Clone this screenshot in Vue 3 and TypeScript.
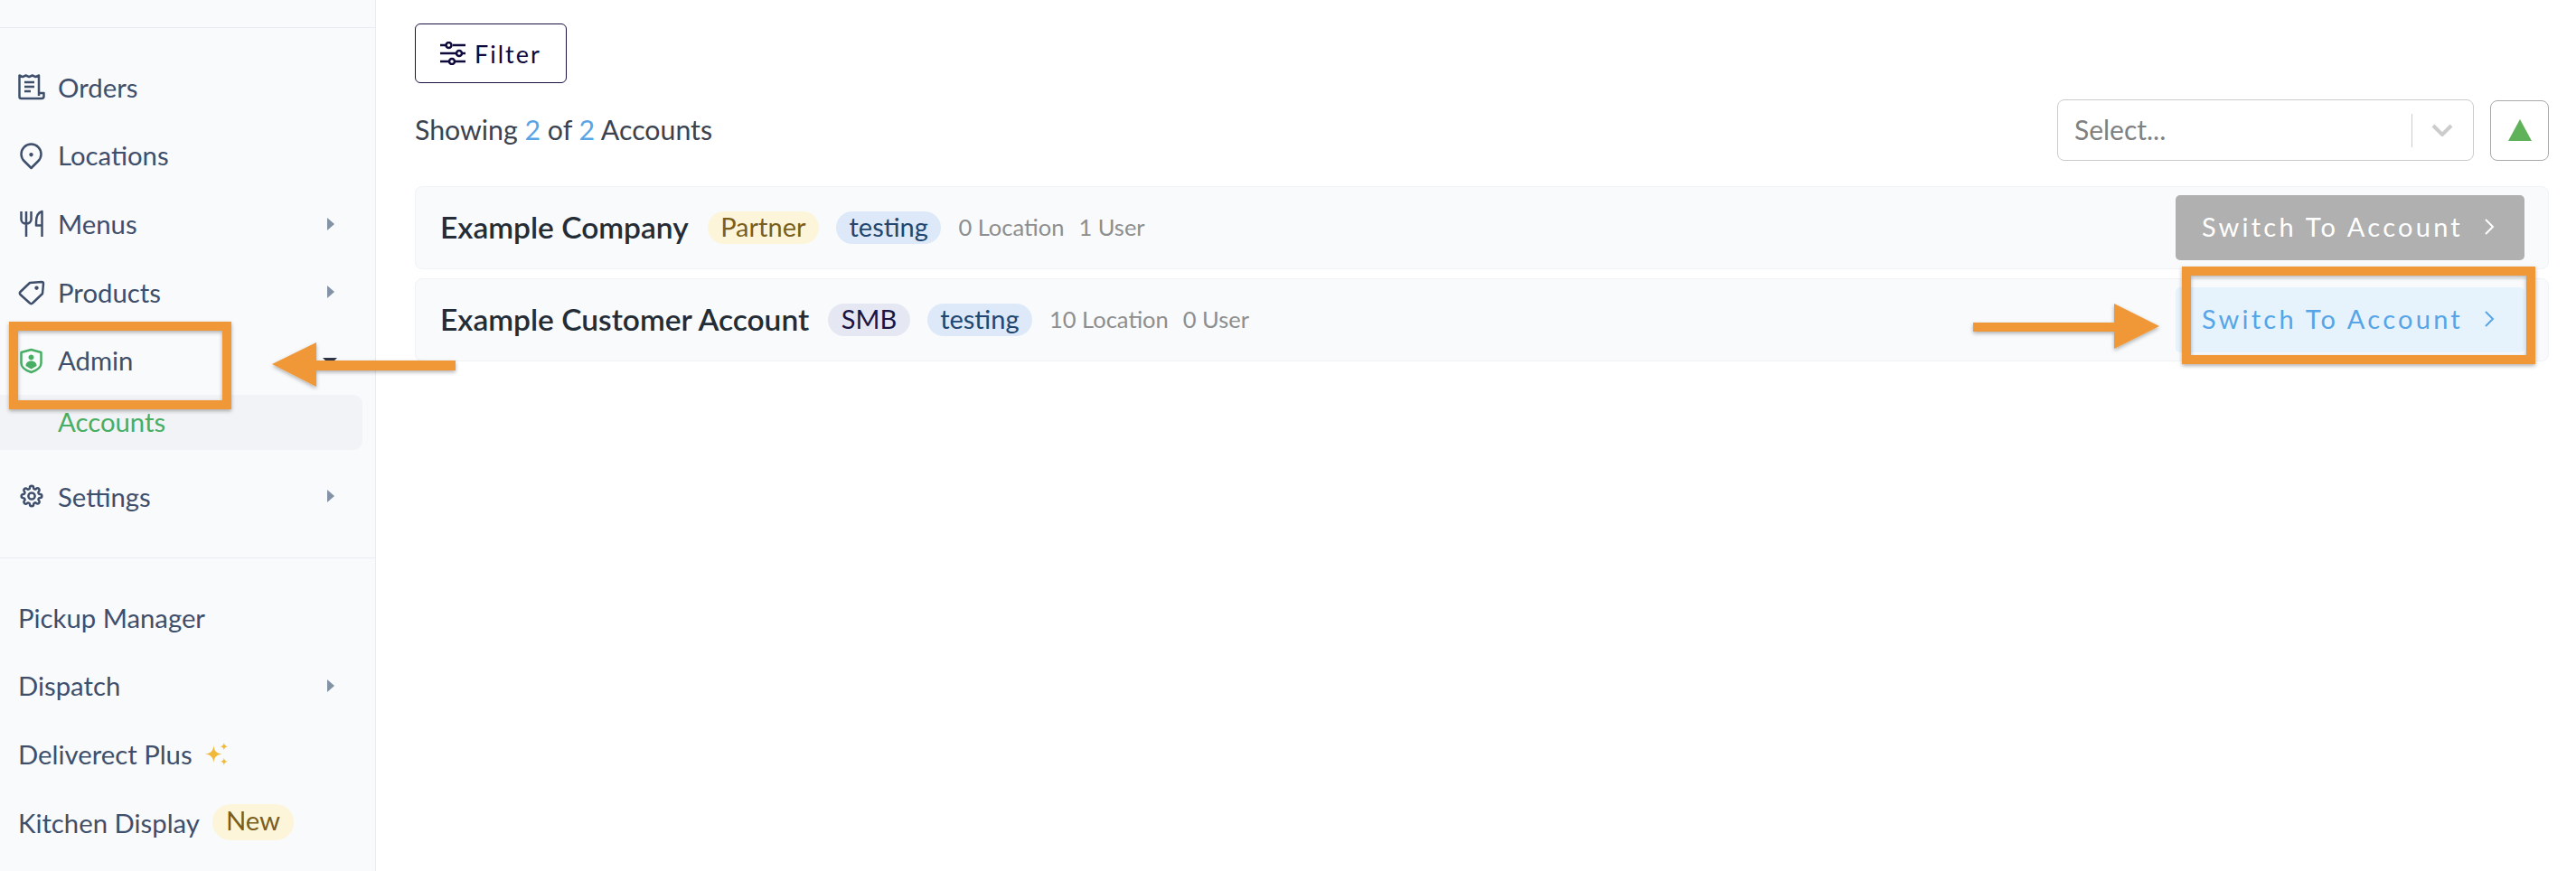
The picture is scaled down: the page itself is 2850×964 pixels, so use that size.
<script setup lang="ts">
interface NavIcon {
  viewBox?: string
  strokes: string[]
  fills?: string[]
}

interface NavItem {
  label: string
  icon?: NavIcon
  caret?: 'right' | 'down'
  active?: boolean
}

const gear =
  'M19.4 15a1.65 1.65 0 0 0 .33 1.82l.06.06a2 2 0 0 1 0 2.83 2 2 0 0 1-2.83 0l-.06-.06a1.65 1.65 0 0 0-1.82-.33 1.65 1.65 0 0 0-1 1.51V21a2 2 0 0 1-2 2 2 2 0 0 1-2-2v-.09A1.65 1.65 0 0 0 9 19.4a1.65 1.65 0 0 0-1.82.33l-.06.06a2 2 0 0 1-2.83 0 2 2 0 0 1 0-2.83l.06-.06a1.65 1.65 0 0 0 .33-1.82 1.65 1.65 0 0 0-1.51-1H3a2 2 0 0 1-2-2 2 2 0 0 1 2-2h.09A1.65 1.65 0 0 0 4.6 9a1.65 1.65 0 0 0-.33-1.82l-.06-.06a2 2 0 0 1 0-2.83 2 2 0 0 1 2.83 0l.06.06a1.65 1.65 0 0 0 1.82.33H9a1.65 1.65 0 0 0 1-1.51V3a2 2 0 0 1 2-2 2 2 0 0 1 2 2v.09a1.65 1.65 0 0 0 1 1.51 1.65 1.65 0 0 0 1.82-.33l.06-.06a2 2 0 0 1 2.83 0 2 2 0 0 1 0 2.83l-.06.06a1.65 1.65 0 0 0-.33 1.82V9a1.65 1.65 0 0 0 1.51 1H21a2 2 0 0 1 2 2 2 2 0 0 1-2 2h-.09a1.65 1.65 0 0 0-1.51 1z'

const mainNav: NavItem[] = [
  {
    label: 'Orders',
    icon: {
      strokes: [
        'M24 26V3.5l-3.6 1.6-3.6-1.6-3.6 1.6-3.6-1.6-3.6 1.6L2.5 3.5V27a2 2 0 0 0 2 2h22.5a2.5 2.5 0 0 0 2.5-2.5V23H24',
        'M8 11h11M8 16h11M8 21h7'
      ]
    }
  },
  {
    label: 'Locations',
    icon: {
      strokes: ['M15.5 30L8 22.5A11 11 0 1 1 23 22.5Z'],
      fills: ['M15.5 13a2.2 2.2 0 1 0 .01 0z']
    }
  },
  {
    label: 'Menus',
    caret: 'right',
    icon: {
      strokes: ['M4.5 3v9a5.5 4.5 0 0 0 11 0V3M10 3v28', 'M27.5 31V3c-4 1-6.5 5-6.5 12v3.5h6.5']
    }
  },
  {
    label: 'Products',
    caret: 'right',
    icon: {
      strokes: ['M3.5 16L14 6l13-1a2 2 0 0 1 2 2l-1 11-11 10.5a2 2 0 0 1-3 0L3.5 19a2 2 0 0 1 0-3z'],
      fills: ['M21.5 9.5a2.2 2.2 0 1 0 .01 0z']
    }
  },
  {
    label: 'Admin',
    caret: 'down',
    active: true,
    icon: {
      strokes: ['M4.5 7l11-3 11 3v12c0 5-6.5 8.5-11 10-4.5-1.5-11-5-11-10z'],
      fills: ['M15.5 9.5a3 3 0 1 0 .01 0z', 'M9.5 22c0-4 3-5.5 6-5.5s6 1.5 6 5.5l-6 3.5z']
    }
  }
]

const settingsItem: NavItem = {
  label: 'Settings',
  caret: 'right',
  icon: { viewBox: '-3.5 -3.5 31 31', strokes: [gear, 'M12 8.500a3.500 3.500 0 1 0 .01 0z'] }
}

interface Tag {
  text: string
  kind: 'yellow' | 'blue' | 'grey'
}

interface Account {
  name: string
  tags: Tag[]
  locations: number
  users: number
  hovered?: boolean
}

const accounts: Account[] = [
  {
    name: 'Example Company',
    tags: [
      { text: 'Partner', kind: 'yellow' },
      { text: 'testing', kind: 'blue' }
    ],
    locations: 0,
    users: 1
  },
  {
    name: 'Example Customer Account',
    tags: [
      { text: 'SMB', kind: 'grey' },
      { text: 'testing', kind: 'blue' }
    ],
    locations: 10,
    users: 0,
    hovered: true
  }
]
</script>

<template>
  <div class="page">
    <aside class="sidebar">
      <div class="side-top"></div>
      <nav class="nav-main">
        <div v-for="item in mainNav" :key="item.label" class="nav-row">
          <svg class="nav-icon" :class="{ green: item.active }" :viewBox="item.icon?.viewBox || '0 0 32 32'">
            <path v-for="d in item.icon?.strokes" :key="d" :d="d" class="ic-stroke" />
            <path v-for="d in item.icon?.fills" :key="d" :d="d" class="ic-fill" />
          </svg>
          <span class="nav-label">{{ item.label }}</span>
          <span v-if="item.caret" class="caret" :class="item.caret"></span>
        </div>
        <div class="nav-sub">Accounts</div>
        <div class="nav-row">
          <svg class="nav-icon" :viewBox="settingsItem.icon?.viewBox">
            <path v-for="d in settingsItem.icon?.strokes" :key="d" :d="d" class="ic-stroke" />
          </svg>
          <span class="nav-label">{{ settingsItem.label }}</span>
          <span class="caret right"></span>
        </div>
      </nav>
      <nav class="nav-extra">
        <div class="nav-row plain"><span class="nav-label">Pickup Manager</span></div>
        <div class="nav-row plain">
          <span class="nav-label">Dispatch</span>
          <span class="caret right"></span>
        </div>
        <div class="nav-row plain">
          <span class="nav-label">Deliverect Plus</span>
          <svg class="sparkle" viewBox="0 0 24 24">
            <path d="M9 3c.8 5.500 2.500 8 9 9-6.500 1-8.200 3.500-9 9-.8-5.500-2.500-8-9-9 6.500-1 8.200-3.500 9-9z" />
            <path d="M20 0c.4 2.500 1.300 3.500 4 4-2.700.5-3.600 1.500-4 4-.4-2.500-1.300-3.500-4-4 2.700-.5 3.600-1.500 4-4z" />
            <path d="M20 16c.4 2.500 1.300 3.500 4 4-2.700.5-3.600 1.500-4 4-.4-2.500-1.300-3.500-4-4 2.700-.5 3.600-1.500 4-4z" />
          </svg>
        </div>
        <div class="nav-row plain">
          <span class="nav-label">Kitchen Display</span>
          <span class="new-pill">New</span>
        </div>
      </nav>
    </aside>

    <main class="content">
      <button class="filter-btn">
        <svg width="30" height="26" viewBox="0 0 30 26" class="filter-icon">
          <path d="M1 4h6M15 4h14M1 13h17M26 13h3M1 22h9M18 22h11" />
          <circle cx="10.500" cy="4" r="3" />
          <circle cx="22" cy="13" r="3" />
          <circle cx="14" cy="22" r="3" />
        </svg>
        <span>Filter</span>
      </button>

      <div class="toolbar">
        <div class="showing">Showing <b>2</b> of <b>2</b> Accounts</div>
        <div class="select">
          <span class="select-text">Select...</span>
          <span class="select-sep"></span>
          <svg width="24" height="14" viewBox="0 0 24 14" class="select-chevron"><path d="M2 2l10 10L22 2" /></svg>
        </div>
        <button class="sort-btn">
          <svg width="26" height="24" viewBox="0 0 26 24"><path d="M13 0L26 24H0z" /></svg>
        </button>
      </div>

      <div class="cards">
        <div v-for="acc in accounts" :key="acc.name" class="card">
          <span class="card-name">{{ acc.name }}</span>
          <span v-for="tag in acc.tags" :key="tag.text" class="tag" :class="tag.kind">{{ tag.text }}</span>
          <span class="meta first">{{ acc.locations }} Location</span>
          <span class="meta">{{ acc.users }} User</span>
          <button class="switch-btn" :class="{ hovered: acc.hovered }">
            <span>Switch To Account</span>
            <svg width="14" height="20" viewBox="0 0 14 20"><path d="M3 2l8 8-8 8" /></svg>
          </button>
        </div>
      </div>
    </main>

    <!-- orange annotations drawn on top of the screenshot -->
    <svg class="annotations" width="2850" height="964" viewBox="0 0 2850 964">
      <defs>
        <filter id="shade" x="-10%" y="-20%" width="120%" height="140%">
          <feDropShadow dx="0" dy="2" stdDeviation="2" flood-color="#000" flood-opacity="0.3" />
        </filter>
      </defs>
      <g filter="url(#shade)">
        <rect x="15" y="361" width="236" height="87" fill="none" stroke="#f09737" stroke-width="10" />
        <path d="M301 403L350 379V399H504V410H350V428z" fill="#f09737" />
        <rect x="2419" y="300" width="381" height="98" fill="none" stroke="#f09737" stroke-width="10" />
        <path d="M2183 357H2339V336L2389 361L2339 386V367H2183z" fill="#f09737" />
      </g>
    </svg>
  </div>
</template>

<style>
html,
body {
  margin: 0;
  background: #fff;
}
</style>

<style scoped>
.page {
  position: relative;
  display: flex;
  width: 2850px;
  height: 964px;
  overflow: hidden;
  font-family: Lato, "Noto Sans", sans-serif;
  font-size: 29.3px;
  color: #3f4f6b;
}

.sidebar {
  width: 416px;
  flex: none;
  box-sizing: border-box;
  background: #f8fafc;
  border-right: 1.5px solid #e8ebf3;
}

.side-top {
  height: 30px;
  border-bottom: 1.5px solid #e8ebf3;
}

.nav-main {
  padding: 27.5px 0 29.5px;
  border-bottom: 1.5px solid #e8ebf3;
}

.nav-extra {
  padding-top: 28px;
}

.nav-row {
  position: relative;
  display: flex;
  align-items: center;
  height: 75.6px;
  padding-left: 19px;
}

.nav-row.plain {
  padding-left: 20px;
}

.nav-icon {
  width: 32px;
  height: 32px;
  margin-right: 13px;
  flex: none;
}

.ic-stroke {
  fill: none;
  stroke: #3f4f6b;
  stroke-width: 2.500px;
  stroke-linejoin: round;
  vector-effect: non-scaling-stroke;
}

.ic-fill {
  fill: #3f4f6b;
}

.nav-icon.green .ic-stroke {
  stroke: #48ae64;
}

.nav-icon.green .ic-fill {
  fill: #48ae64;
}

.caret {
  position: absolute;
  width: 0;
  height: 0;
}

.caret.right {
  left: 362px;
  top: 31px;
  border-top: 7px solid transparent;
  border-bottom: 7px solid transparent;
  border-left: 8px solid #8492a6;
}

.caret.down {
  left: 357px;
  top: 35px;
  border-left: 8px solid transparent;
  border-right: 8px solid transparent;
  border-top: 8px solid #2c3446;
}

.nav-sub {
  display: flex;
  align-items: center;
  height: 61px;
  margin: 1px 14px 13px 0;
  padding-left: 64px;
  padding-bottom: 3px;
  box-sizing: border-box;
  background: #f1f3f6;
  border-radius: 0 10px 10px 0;
  color: #48ae64;
}

.sparkle {
  width: 25px;
  height: 25px;
  margin-left: 14px;
  fill: #f0b93a;
}

.new-pill {
  margin-left: 14px;
  padding: 0 15px;
  height: 40px;
  line-height: 36px;
  border-radius: 20px;
  background: #fdf5d9;
  color: #7a5f1c;
}

.content {
  flex: 1;
  min-width: 0;
  padding: 26px 30px 0 43px;
}

button {
  font-family: inherit;
  cursor: pointer;
}

.filter-btn {
  display: flex;
  align-items: center;
  gap: 9px;
  width: 168px;
  height: 66px;
  padding: 0 0 0 26px;
  box-sizing: border-box;
  background: #fff;
  border: 1.500px solid #1a1445;
  border-radius: 6px;
  color: #0f0a3c;
  font-size: 27px;
  letter-spacing: 2px;
}

.filter-icon {
  fill: none;
  stroke: #0f0a3c;
  stroke-width: 2.500px;
}

.toolbar {
  display: flex;
  align-items: center;
  height: 68px;
  margin: 18px 0 28px;
}

.showing {
  flex: 1;
  font-size: 30.3px;
  color: #3b4250;
  padding-bottom: 2px;
}

.showing b {
  font-weight: 400;
  color: #57a5e6;
}

.select {
  display: flex;
  align-items: center;
  width: 461px;
  height: 68px;
  box-sizing: border-box;
  padding-left: 18px;
  border: 1.500px solid #ccc;
  border-radius: 8px;
  margin-right: 18px;
}

.select-text {
  flex: 1;
  font-size: 30px;
  color: #808080;
  padding-bottom: 2px;
}

.select-sep {
  width: 1.500px;
  height: 37px;
  background: #ccc;
}

.select-chevron {
  margin: 0 22px 0 21px;
  fill: none;
  stroke: #ccc;
  stroke-width: 4px;
}

.sort-btn {
  display: flex;
  align-items: center;
  justify-content: center;
  width: 65px;
  height: 67px;
  padding: 0;
  background: #fff;
  border: 1.500px solid #aaa;
  border-radius: 8px;
}

.sort-btn path {
  fill: #5fb25a;
}

.cards {
  display: flex;
  flex-direction: column;
  gap: 10px;
}

.card {
  display: flex;
  align-items: center;
  height: 92px;
  box-sizing: border-box;
  padding: 0 26px 0 27px;
  background: #f8fafc;
  border: 1.500px solid #f0f2f6;
  border-radius: 8px;
}

.card-name {
  font-size: 33.5px;
  font-weight: 600;
  color: #242c36;
  margin-right: 21px;
  padding-bottom: 2px;
}

.tag {
  height: 36px;
  line-height: 34px;
  padding: 0 14.5px;
  border-radius: 18px;
  margin-right: 19px;
  font-size: 29px;
}

.meta {
  font-size: 25.5px;
  color: #8e8e8e;
  margin-right: 16px;
  padding-bottom: 2px;
}

.tag.yellow {
  background: #fdf5d9;
  color: #7a5f1c;
}

.tag.blue {
  background: #dde9f8;
  color: #21466f;
}

.tag.grey {
  background: #e5e8f2;
  color: #1a1445;
}

.switch-btn {
  display: flex;
  align-items: center;
  width: 386px;
  height: 72px;
  margin-left: auto;
  padding: 0 0 3px 29px;
  box-sizing: border-box;
  border: none;
  border-radius: 5px;
  background: #b0b0b0;
  color: #fff;
  font-size: 29px;
  letter-spacing: 3.25px;
}

.switch-btn svg {
  margin-left: 22px;
  fill: none;
  stroke: #fff;
  stroke-width: 2px;
}

.switch-btn.hovered {
  background: #e6f3fd;
  color: #57a5e6;
}

.switch-btn.hovered svg {
  stroke: #57a5e6;
}

.annotations {
  position: absolute;
  left: 0;
  top: 0;
  pointer-events: none;
}
</style>
